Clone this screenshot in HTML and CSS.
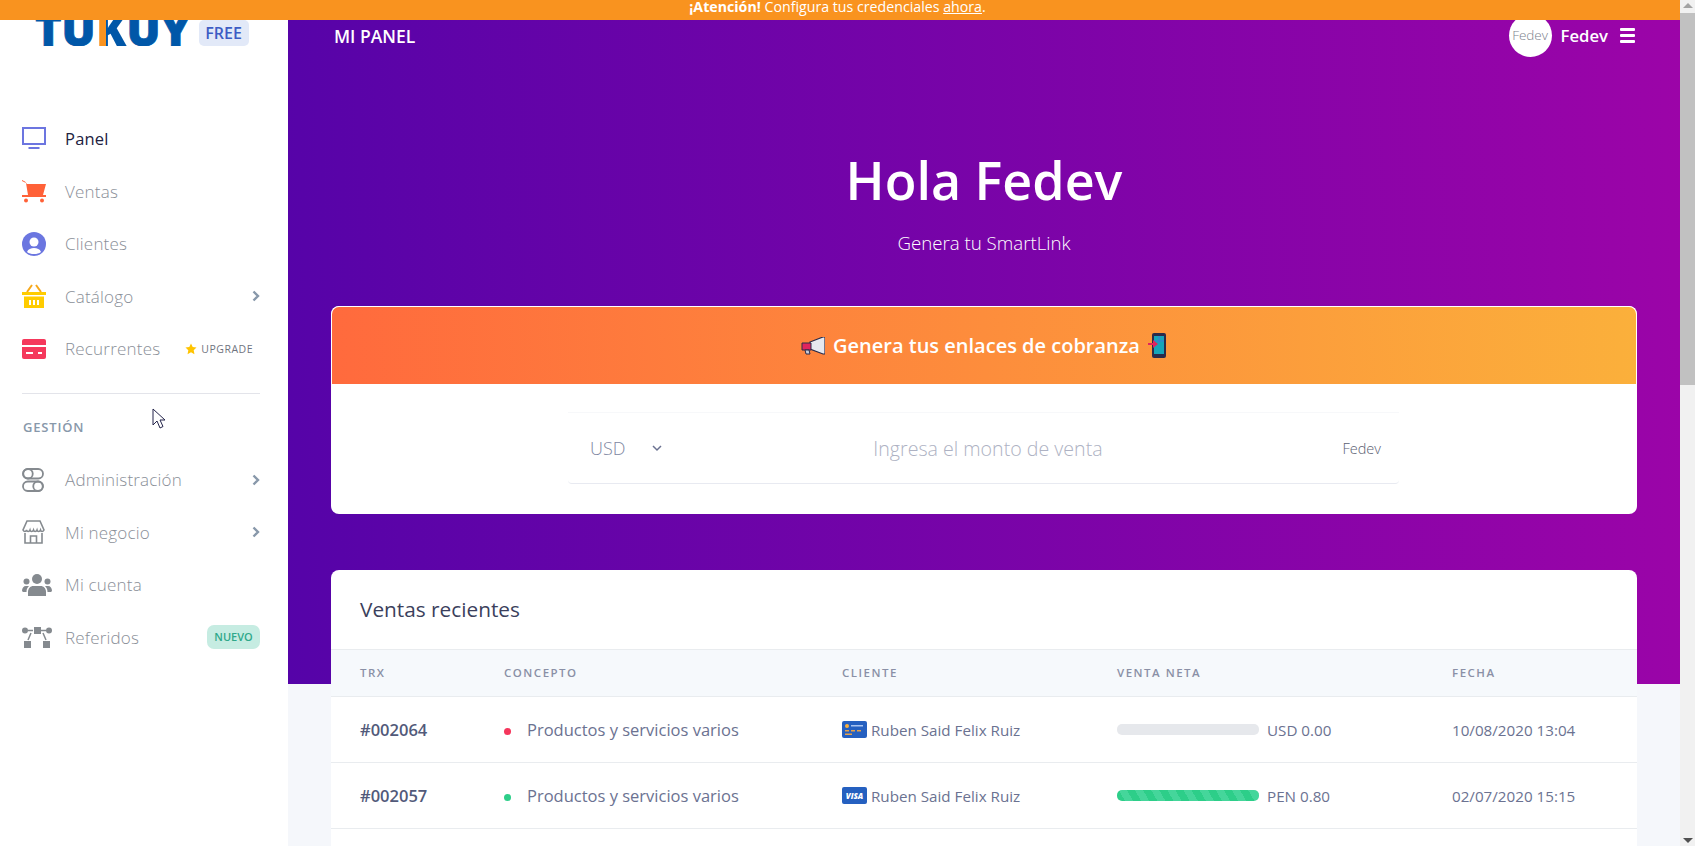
FILE: index.html
```html
<!DOCTYPE html>
<html lang="es">
<head>
    <meta charset="UTF-8">
    <meta name="viewport" content="width=device-width, initial-scale=1.0">
    <title>Mi panel</title>
    <link rel="stylesheet" href="styles.css">
</head>
<body>
    <div class="page">
        <div class="notice"><b>¡Atención!</b> Configura tus credenciales <a href="#">ahora</a>.</div>
        <div class="layout">
            <aside class="sidebar">
                <div class="brand">
                    <span class="logo">TU<span class="logo-k">K</span>UY</span>
                    <span class="plan">FREE</span>
                </div>
                <nav class="menu menu-main">
                    <a class="item active" href="#">
                        <span class="ico"><svg width="24" height="23" viewBox="0 0 24 23"><rect x="1" y="1" width="22" height="16" fill="none" stroke="#6c75e0" stroke-width="2"/><rect x="6.500" y="20" width="11" height="2" fill="#6c75e0"/></svg></span>
                        Panel
                    </a>
                    <a class="item" href="#">
                        <span class="ico"><svg width="24" height="24" viewBox="0 0 24 24"><path d="M0 1l3 1.500L5 5h19l-3 11H6L4 4 0 2z" fill="#ff6138"/><rect y="16" width="24" height="2" fill="#ff6138"/><circle cx="4" cy="21.500" r="2" fill="#ff6138"/><circle cx="20" cy="21.500" r="2" fill="#ff6138"/></svg></span>
                        Ventas
                    </a>
                    <a class="item" href="#">
                        <span class="ico"><svg width="24" height="24" viewBox="0 0 24 24"><circle cx="12" cy="12" r="12" fill="#6b76e0"/><circle cx="12" cy="10" r="4.500" fill="#fff"/><path d="M5 20c1-3 4-4 7-4s6 1 7 4c-2 1.500-4 2-7 2s-5-.5-7-2z" fill="#fff"/></svg></span>
                        Clientes
                    </a>
                    <a class="item" href="#">
                        <span class="ico"><svg width="24" height="24" viewBox="0 0 24 24"><path d="M5 8l5-7M19 8l-5-7" stroke="#f7a81b" stroke-width="2" fill="none"/><rect y="8" width="24" height="3" fill="#fc0"/><rect x="2" y="12.500" width="20" height="11.500" fill="#fc0"/><path d="M7 16h2v5H7zM11 16h2v5h-2zM15 16h2v5h-2z" fill="#fff"/></svg></span>
                        Catálogo
                        <svg class="chev" width="8" height="12" viewBox="0 0 8 12"><path d="M1.500 1.500L6 6l-4.500 4.500" fill="none" stroke="#8898aa" stroke-width="2.400"/></svg>
                    </a>
                    <a class="item" href="#">
                        <span class="ico"><svg width="24" height="20" viewBox="0 0 24 20"><rect width="24" height="20" rx="2" fill="#f5385c"/><rect y="6" width="24" height="2" fill="#fff"/><path d="M4 13h7v2H4zM16 13h4v2h-4z" fill="#fff"/></svg></span>
                        Recurrentes
                        <span class="upgrade">
                            <svg width="12" height="12" viewBox="0 0 24 24"><path d="M12 1l3.400 7.200 7.600 1-5.600 5.300 1.500 7.800L12 18.400l-6.900 3.900 1.500-7.800L1 9.200l7.600-1z" fill="#ffc400"/></svg>
                            UPGRADE
                        </span>
                    </a>
                </nav>
                <hr class="divider">
                <div class="menu-title">GESTIÓN</div>
                <nav class="menu">
                    <a class="item" href="#">
                        <span class="ico"><svg width="22" height="24" viewBox="0 0 22 24"><g fill="none" stroke="#858a8f" stroke-width="1.800"><rect x="1" y="1" width="20" height="9.500" rx="4.750"/><circle cx="6" cy="5.750" r="4.750"/><rect x="1" y="13.500" width="20" height="9.500" rx="4.750"/><circle cx="16" cy="18.250" r="4.750"/></g></svg></span>
                        Administración
                        <svg class="chev" width="8" height="12" viewBox="0 0 8 12"><path d="M1.500 1.500L6 6l-4.500 4.500" fill="none" stroke="#8898aa" stroke-width="2.400"/></svg>
                    </a>
                    <a class="item" href="#">
                        <span class="ico"><svg width="23" height="24" viewBox="0 0 23 24"><g fill="none" stroke="#858a8f" stroke-width="1.600"><path d="M5 1h13l4 9c-1 2-3 2-3.500 0-.8 2-3 2-3.500 0-.8 2-3 2-3.500 0-.8 2-3 2-3.500 0-.8 2-3 2-3.500 0-.5 2-2.500 2-3.500 0z"/><path d="M3 13v10h17V13"/><path d="M8.500 23v-7h6v7"/></g></svg></span>
                        Mi negocio
                        <svg class="chev" width="8" height="12" viewBox="0 0 8 12"><path d="M1.500 1.500L6 6l-4.500 4.500" fill="none" stroke="#8898aa" stroke-width="2.400"/></svg>
                    </a>
                    <a class="item" href="#">
                        <span class="ico"><svg width="30" height="22" viewBox="0 0 30 22" fill="#858a8f"><circle cx="15" cy="5" r="5"/><path d="M6 22v-4c0-4 3-6 5-6h8c2 0 5 2 5 6v4z"/><circle cx="4.500" cy="7.500" r="3"/><circle cx="25.500" cy="7.500" r="3"/><path d="M0 17c0-3 1.500-5 4-5h3c-1.500 1.500-2.500 3-2.500 6H1zM30 17c0-3-1.500-5-4-5h-3c1.500 1.500 2.500 3 2.500 6H29z"/></svg></span>
                        Mi cuenta
                    </a>
                    <a class="item" href="#">
                        <span class="ico"><svg width="30" height="21" viewBox="0 0 30 21" fill="#858a8f"><circle cx="3" cy="3.500" r="3"/><circle cx="27" cy="3.500" r="3"/><rect x="12" y="0" width="7" height="7"/><rect x="2" y="14" width="7" height="7"/><rect x="21" y="14" width="7" height="7"/><path d="M6 3.500h5M19 3.500h5M9 6l-3 7M21 6l3 7" stroke="#858a8f" stroke-width="1.500" fill="none"/></svg></span>
                        Referidos
                        <span class="badge-new">NUEVO</span>
                    </a>
                </nav>
            </aside>
            <main class="content">
                <div class="topbar">
                    <span class="topbar-title">MI PANEL</span>
                    <div class="user">
                        <span class="avatar">Fedev</span>
                        <span class="user-name">Fedev</span>
                        <span class="burger"><i></i><i></i><i></i></span>
                    </div>
                </div>
                <section class="hero">
                    <h1>Hola Fedev</h1>
                    <p>Genera tu SmartLink</p>
                </section>
                <section class="card">
                    <div class="card-banner">
                        <svg width="24" height="18" viewBox="0 0 24 18"><path d="M9 5L22 0h2v17h-2L9 12z" fill="#e6e8ee" stroke="#2b2b4a" stroke-width="1.200"/><path d="M1 6h9v7H1z" fill="#e0245e" stroke="#2b2b4a" stroke-width="1"/><path d="M4 13h4l1 4H5z" fill="#c9cdd8" stroke="#2b2b4a"/></svg>
                        <span>Genera tus enlaces de cobranza</span>
                        <svg width="19" height="25" viewBox="0 0 19 25"><rect x="4" y="0" width="14" height="25" rx="2" fill="#2b2b4a"/><rect x="6" y="3" width="10" height="18" fill="#16a5b8"/><path d="M6 8h10M11 3v7" stroke="#3a7bd5"/><path d="M0 10h5V7l5 4-5 4v-3H0z" fill="#e0245e"/></svg>
                    </div>
                    <div class="card-body">
                        <div class="link-form">
                            <span class="currency">USD</span>
                            <svg class="currency-chev" width="10" height="7" viewBox="0 0 10 7"><path d="M1 1l4 4 4-4" fill="none" stroke="#6b7291" stroke-width="1.500"/></svg>
                            <span class="amount">Ingresa el monto de venta</span>
                            <span class="seller">Fedev</span>
                        </div>
                    </div>
                </section>
                <section class="card card-sales">
                    <h2>Ventas recientes</h2>
                    <table class="sales">
                        <thead>
                            <tr>
                                <th class="col-trx">TRX</th>
                                <th class="col-concept">CONCEPTO</th>
                                <th class="col-client">CLIENTE</th>
                                <th class="col-net">VENTA NETA</th>
                                <th>FECHA</th>
                            </tr>
                        </thead>
                        <tbody>
                            <tr>
                                <td class="trx">#002064</td>
                                <td class="concept"><span class="dot dot-red"></span>Productos y servicios varios</td>
                                <td>
                                    <div class="client">
                                        <svg width="25" height="17" viewBox="0 0 25 17"><rect width="25" height="17" rx="2" fill="#2560c0"/><circle cx="5" cy="5" r="2" fill="#fbb03b"/><path d="M9 4h12v1.500H9z" fill="#a9c4f0"/><path d="M3 9h4v1.500H3zM9 9h4v1.500H9zM15 9h4v1.500h-4z" fill="#e8a24a"/><path d="M3 12.500h7V14H3z" fill="#e8a24a"/></svg>
                                        Ruben Said Felix Ruiz
                                    </div>
                                </td>
                                <td><div class="net"><span class="bar"></span>USD 0.00</div></td>
                                <td>10/08/2020 13:04</td>
                            </tr>
                            <tr>
                                <td class="trx">#002057</td>
                                <td class="concept"><span class="dot dot-green"></span>Productos y servicios varios</td>
                                <td>
                                    <div class="client">
                                        <svg width="25" height="17" viewBox="0 0 25 17"><rect width="25" height="17" rx="2" fill="#2560c0"/><text x="12.500" y="12" text-anchor="middle" font-family="Open Sans" font-size="8" font-weight="800" font-style="italic" fill="#fff">VISA</text></svg>
                                        Ruben Said Felix Ruiz
                                    </div>
                                </td>
                                <td><div class="net"><span class="bar bar-full"></span>PEN 0.80</div></td>
                                <td>02/07/2020 15:15</td>
                            </tr>
                        </tbody>
                    </table>
                </section>
            </main>
        </div>
    </div>
    <div class="scrollbar">
        <span class="arrow-up"></span>
        <span class="thumb"></span>
        <span class="arrow-down"></span>
    </div>
    <svg class="cursor" width="14" height="21" viewBox="0 0 14 21"><path d="M1 1v16l4-4 3 7 3-1.500-3-6.500h5z" fill="#fff" stroke="#23234a" stroke-width="1"/></svg>
</body>
</html>
```

FILE: styles.css
```css
* {
    margin: 0;
    padding: 0;
    box-sizing: border-box;
}
body {
    font-family: "Open Sans", Arial, sans-serif;
    display: flex;
    height: 100vh;
    overflow: hidden;
    background-color: #f5f7fb;
    color: #525f7f;
}
a {
    color: inherit;
    text-decoration: none;
}
.page {
    flex: 1;
    min-width: 0;
    display: flex;
    flex-direction: column;
}
.notice {
    height: 20px;
    padding-right: 5px;
    line-height: 13px;
    background-color: #f9931f;
    color: #fff;
    font-size: 14.200px;
    text-align: center;
    flex-shrink: 0;
}
.notice a {
    text-decoration: underline;
}
.layout {
    flex: 1;
    min-height: 0;
    display: flex;
}

/* sidebar */
.sidebar {
    width: 288px;
    flex-shrink: 0;
    background-color: #fff;
    padding-right: 28px;
}
.brand {
    height: 26px;
    padding-left: 35px;
    display: flex;
    align-items: flex-end;
    overflow: hidden;
}
.logo {
    font-size: 45px;
    font-weight: 800;
    line-height: 35px;
    color: #0057a8;
    -webkit-text-stroke: 0.8px #0057a8;
}
.logo-k {
    background: linear-gradient(90deg, #f9931f 32%, #0057a8 32%);
    -webkit-background-clip: text;
    background-clip: text;
    color: transparent;
    -webkit-text-stroke: 0;
}
.plan {
    width: 50px;
    height: 26px;
    margin-left: 8px;
    border-radius: 5px;
    background-color: #e2e9f8;
    color: #3d5cc4;
    font-size: 16px;
    font-weight: 600;
    line-height: 26px;
    text-align: center;
}
.menu-main {
    margin-top: 66.400px;
}
.item {
    height: 52.5px;
    padding-left: 22px;
    display: flex;
    align-items: center;
    color: #8a8f98;
    font-size: 17px;
    font-weight: 300;
    letter-spacing: 0.2px;
}
.item.active {
    color: #22223f;
    font-size: 16.500px;
    font-weight: 400;
}
.ico {
    width: 43px;
    flex-shrink: 0;
    display: flex;
    align-items: center;
}
.chev {
    margin-left: auto;
}
.upgrade {
    margin-left: auto;
    margin-right: 7px;
    display: flex;
    align-items: center;
    gap: 4px;
    font-size: 10.500px;
    font-weight: 400;
    letter-spacing: 0.5px;
    color: #6f7480;
}
.badge-new {
    margin-left: auto;
    width: 53px;
    height: 24px;
    border-radius: 7px;
    background-color: #c6ece2;
    color: #2fa88a;
    font-size: 11px;
    font-weight: 600;
    letter-spacing: 0;
    line-height: 24px;
    text-align: center;
}
.divider {
    margin: 18.600px 0 0 22px;
    border: none;
    border-top: 1px solid #e3e4ea;
}
.menu-title {
    margin: 23px 0 16px 23px;
    line-height: 20px;
    font-size: 13px;
    font-weight: 600;
    letter-spacing: 0.8px;
    color: #8898aa;
}

/* main area */
.content {
    flex: 1;
    min-width: 0;
    padding: 0 43px;
    overflow: hidden;
    background: linear-gradient(87deg, #5503a8 0%, #9c04a8 100%) top / 100% 664px no-repeat;
}
.topbar {
    height: 30px;
    margin: 0 2px 0 3px;
    display: flex;
    align-items: center;
    justify-content: space-between;
    color: #fff;
}
.topbar-title {
    font-size: 17.500px;
    font-weight: 600;
    padding-top: 1px;
}
.user {
    display: flex;
    align-items: center;
}
.avatar {
    width: 43px;
    height: 43px;
    border-radius: 50%;
    background-color: #fff;
    color: #7b7f8c;
    font-size: 13.500px;
    font-weight: 300;
    line-height: 43px;
    text-align: center;
    flex-shrink: 0;
}
.user-name {
    margin-left: 9px;
    font-size: 16.700px;
    font-weight: 600;
}
.burger {
    width: 15px;
    margin-left: 12px;
    display: flex;
    flex-direction: column;
    gap: 3px;
}
.burger i {
    height: 3px;
    background-color: #fff;
    border-radius: 1px;
}
.hero {
    padding-top: 100px;
    text-align: center;
    color: #fff;
}
.hero h1 {
    font-size: 52px;
    font-weight: 600;
    line-height: 60px;
}
.hero p {
    margin-top: 21px;
    font-size: 18.700px;
    font-weight: 300;
    line-height: 24px;
}
.card {
    margin-top: 51px;
    background-color: #fff;
    border-radius: 8px;
    overflow: hidden;
}
.card-banner {
    height: 78px;
    display: flex;
    align-items: center;
    justify-content: center;
    gap: 8px;
    border: 1px solid #fff;
    border-bottom: none;
    border-radius: 8px 8px 0 0;
    background: linear-gradient(87deg, #ff6a3d 0%, #fbb03b 100%);
    color: #fff;
    font-size: 20px;
    font-weight: 600;
}
.card-body {
    padding: 28px 238px 30px 237px;
}
.link-form {
    height: 72px;
    padding: 0 18px 0 22px;
    display: flex;
    align-items: center;
    border-top: 1px solid #f7f8fa;
    border-bottom: 1px solid #e8eaf1;
    border-radius: 0 0 4px 4px;
}
.currency {
    font-size: 18px;
    font-weight: 300;
    color: #8087a2;
}
.currency-chev {
    margin-left: 27px;
}
.amount {
    flex: 1;
    text-align: center;
    padding-right: 29px;
    font-size: 19.600px;
    font-weight: 300;
    color: #aeb2c3;
}
.seller {
    font-size: 14.500px;
    color: #5a6072;
    font-weight: 300;
}
.card-sales {
    margin-top: 56px;
    border-radius: 8px 8px 0 0;
    padding-bottom: 40px;
}
.card-sales h2 {
    height: 79px;
    padding-left: 29px;
    font-size: 20.800px;
    font-weight: 500;
    line-height: 79px;
    color: #3b3f5c;
}
.sales {
    width: 100%;
    border-collapse: collapse;
    table-layout: fixed;
}
.sales th {
    height: 47px;
    padding-bottom: 2px;
    background-color: #f6f9fc;
    border-top: 1px solid #e9ecef;
    border-bottom: 1px solid #e9ecef;
    text-align: left;
    font-size: 11.500px;
    font-weight: 600;
    letter-spacing: 1.500px;
    color: #8a90a6;
}
.sales td {
    height: 66px;
    border-bottom: 1px solid #e9ecef;
    font-size: 15.200px;
    color: #6b7291;
}
.col-trx {
    width: 173px;
}
.col-concept {
    width: 338px;
}
.col-client {
    width: 275px;
}
.col-net {
    width: 335px;
}
.sales th:first-child,
.sales td:first-child {
    padding-left: 29px;
}
.sales td.trx {
    font-size: 16.500px;
    font-weight: 600;
    color: #525a7a;
}
.sales td.concept {
    font-size: 16.500px;
}
.dot {
    display: inline-block;
    width: 7px;
    height: 7px;
    margin-right: 16px;
    border-radius: 50%;
    vertical-align: 1px;
}
.dot-red {
    background-color: #f5365c;
}
.dot-green {
    background-color: #2dce89;
}
.client {
    display: flex;
    align-items: center;
    gap: 4px;
}
.net {
    display: flex;
    align-items: center;
    gap: 8px;
}
.bar {
    width: 142px;
    height: 11px;
    border-radius: 5px;
    background-color: #e6e8ec;
}
.bar-full {
    background: repeating-linear-gradient(60deg, #2dce89 0 7px, #45d69b 7px 14px);
}

/* fake scrollbar, headless browser hides the real one */
.scrollbar {
    width: 15px;
    flex-shrink: 0;
    display: flex;
    flex-direction: column;
    align-items: center;
    background-color: #f1f1f1;
}
.arrow-up,
.arrow-down {
    width: 0;
    height: 0;
    border-left: 5px solid transparent;
    border-right: 5px solid transparent;
}
.arrow-up {
    margin-top: 3px;
    border-bottom: 5px solid #a3a3a3;
}
.thumb {
    width: 100%;
    height: 372px;
    margin-top: 5px;
    background-color: #c1c1c1;
}
.arrow-down {
    margin-top: auto;
    margin-bottom: 3px;
    border-top: 5px solid #505050;
}
.cursor {
    position: absolute;
    left: 152px;
    top: 408px;
}
```
